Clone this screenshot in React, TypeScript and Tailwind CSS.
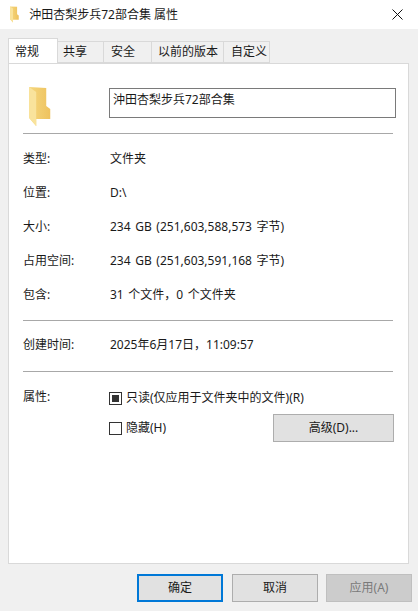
const font = "font-['Noto_Sans','Noto_Sans_CJK_SC',sans-serif]";

function FolderIcon({ size = 34 }: { size?: number }) {
  return (
    <svg width={size * 0.66} height={size * 1.18} viewBox="0 0 22 40">
      <defs>
        <linearGradient id="folderBack" x1="0" y1="0" x2="1" y2="0">
          <stop offset="0%" stopColor="#f5d77e" />
          <stop offset="100%" stopColor="#eec25e" />
        </linearGradient>
      </defs>
      <path d="M0 1 L17 2 L17 20 L21 23 L21 33 L7 33 L7 40 L0 32Z" fill="url(#folderBack)" />
      <path d="M0 1 L7 6 L7 40 L0 32Z" fill="#f9e39c" />
    </svg>
  );
}

function Tab({ label, width, active = false }: { label: string; width: string; active?: boolean }) {
  return (
    <div
      className={
        active
          ? `relative z-10 -mb-px flex h-[25px] items-start border border-b-0 border-[#d9d9d9] bg-white pl-[6px] pt-[4px] text-[12px] text-[#1a1a1a] ${width}`
          : `mt-[3px] flex h-[22px] items-center border border-l-0 border-[#d9d9d9] bg-[#f0f0f0] text-[12px] text-[#1a1a1a] ${width}`
      }
    >
      {label}
    </div>
  );
}

function Row({ label, value }: { label: string; value: string }) {
  return (
    <div className="flex h-[34px] items-center text-[12px] text-[#1a1a1a]">
      <div className="w-[87px]">{label}</div>
      <div className="[word-spacing:1.5px]">{value}</div>
    </div>
  );
}

function Divider() {
  return <div className="h-px bg-[#a8a8a8]" />;
}

function FootButton({
  label,
  kind = "plain",
}: {
  label: string;
  kind?: "plain" | "main" | "off";
}) {
  const cls =
    kind === "main"
      ? "border-2 border-[#0078d7] bg-[#e1e1e1] text-[#1a1a1a]"
      : kind === "off"
        ? "border border-[#bfbfbf] bg-[#cccccc] text-[#7a7a7a]"
        : "border border-[#adadad] bg-[#e1e1e1] text-[#1a1a1a]";
  return (
    <div className={`flex h-[28px] w-[86px] items-center justify-center text-[12px] ${cls}`}>
      {label}
    </div>
  );
}

export default function App() {
  return (
    <div className={`flex h-[611px] w-[418px] flex-col bg-[#f0f0f0] ${font}`}>
      {/* title bar */}
      <div className="flex h-[29px] items-center bg-white pl-[10px] pr-[15px]">
        <FolderIcon size={14} />
        <span className="ml-[10px] text-[12px] text-[#1a1a1a]">沖田杏梨步兵72部合集 属性</span>
        <svg className="ml-auto" width="11" height="11" viewBox="0 0 11 11">
          <path d="M0.5 0.5 L10.5 10.5 M10.5 0.5 L0.5 10.5" stroke="#111" strokeWidth="1" fill="none" />
        </svg>
      </div>

      {/* tabs */}
      <div className="ml-[8px] mt-[9px] flex">
        <Tab label="常规" width="w-[50px]" active />
        <Tab label="共享" width="w-[46px] pl-[5px]" />
        <Tab label="安全" width="w-[48px] pl-[7px]" />
        <Tab label="以前的版本" width="w-[72px] pl-[6px]" />
        <Tab label="自定义" width="w-[46px] pl-[7px]" />
      </div>

      {/* panel */}
      <div className="ml-[8px] flex h-[501px] w-[401px] flex-col border border-[#d9d9d9] bg-white pl-[14px] pr-[15px]">
        <div className="flex h-[69px] items-start pt-[22px]">
          <div className="flex w-[86px] shrink-0 pl-[6px]">
            <FolderIcon />
          </div>
          <div className="mt-[2px] h-[30px] w-[287px] shrink-0 border border-[#7a7a7a] px-[3px] pt-[2px] text-[12px] text-[#1a1a1a]">
            沖田杏梨步兵72部合集
          </div>
        </div>
        <Divider />
        <div className="pt-[8px]">
          <Row label="类型:" value="文件夹" />
          <Row label="位置:" value="D:\" />
          <Row label="大小:" value="234 GB (251,603,588,573 字节)" />
          <Row label="占用空间:" value="234 GB (251,603,591,168 字节)" />
          <Row label="包含:" value="31 个文件，0 个文件夹" />
        </div>
        <div className="mt-[8px]">
          <Divider />
        </div>
        <div className="pb-[9px] pt-[7px]">
          <Row label="创建时间:" value="2025年6月17日，11:09:57" />
        </div>
        <Divider />
        <div className="flex pt-[16px] text-[12px] text-[#1a1a1a]">
          <div className="w-[86px] shrink-0">属性:</div>
          <div className="flex-1">
            <div className="mt-[1px] flex items-center gap-[4px]">
              <div className="flex h-[13px] w-[13px] items-center justify-center border border-[#333]">
                <div className="h-[7px] w-[7px] bg-[#333]" />
              </div>
              只读(仅应用于文件夹中的文件)(R)
            </div>
            <div className="mt-[7px] flex items-center">
              <div className="flex items-center gap-[4px]">
                <div className="h-[13px] w-[13px] border border-[#333]" />
                隐藏(H)
              </div>
              <div className="-mr-px ml-auto flex h-[28px] w-[121px] items-center justify-center border border-[#adadad] bg-[#e1e1e1]">
                高级(D)...
              </div>
            </div>
          </div>
        </div>
      </div>

      {/* footer */}
      <div className="mr-[6px] mt-[10px] flex justify-end">
        <FootButton label="确定" kind="main" />
        <div className="ml-[9px]">
          <FootButton label="取消" />
        </div>
        <div className="ml-[8px]">
          <FootButton label="应用(A)" kind="off" />
        </div>
      </div>
    </div>
  );
}
